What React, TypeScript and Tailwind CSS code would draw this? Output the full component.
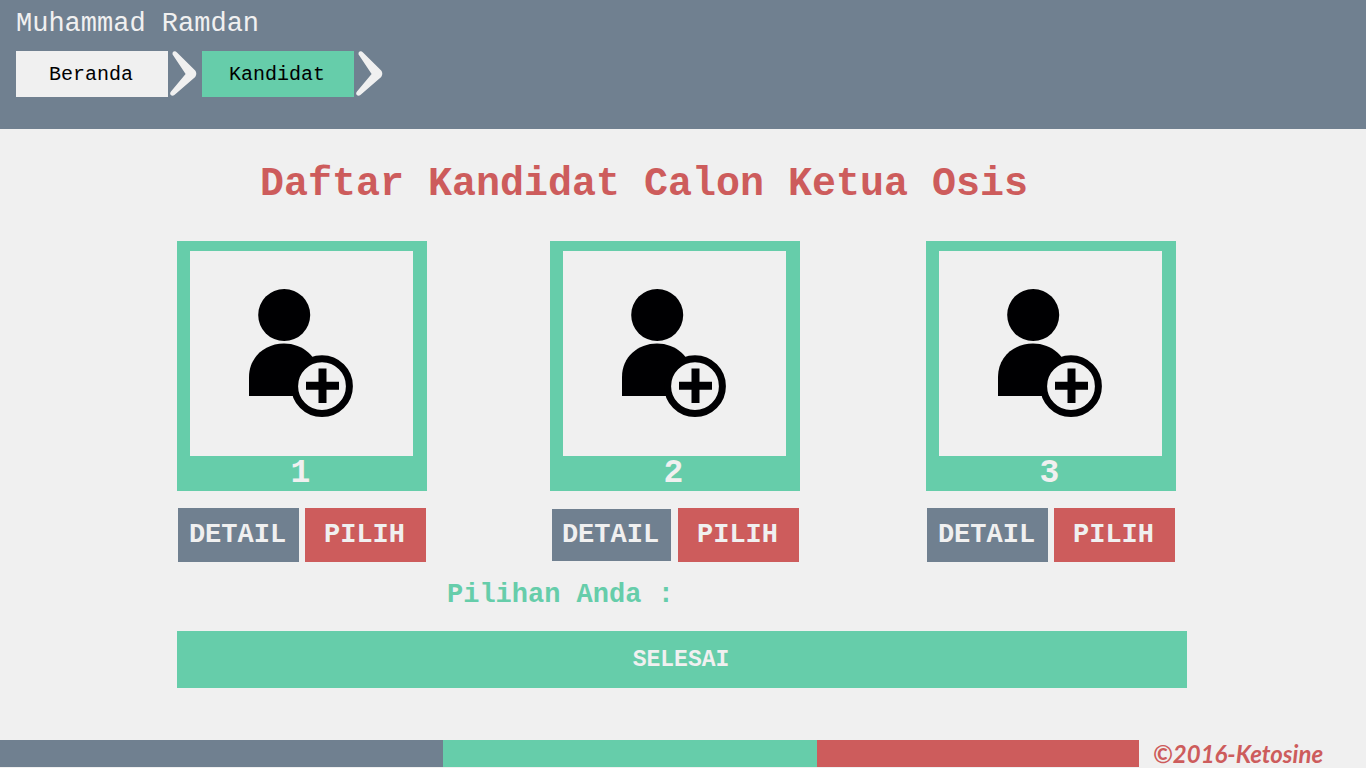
import React from "react";

const steps = [
  { label: "Beranda", tone: "bg-[#f0f0f0]" },
  { label: "Kandidat", tone: "bg-[#66cdaa]" },
];

const candidates = [
  { number: 1, active: false },
  { number: 2, active: true },
  { number: 3, active: false },
];

function Chevron() {
  return (
    <svg aria-hidden="true" viewBox="0 0 34 46" className="h-[46px] w-[34px] shrink-0" fill="#f0f0f0">
      <path d="M9 1.4 L27.2 19.6 Q29.4 22.8 27.2 26 L6.4 44 Q4.4 45.6 2.8 44 Q1.4 42.4 3 40.6 L17.6 23 L4.6 3.4 Q4.2 1.2 5.6 0.5 Q7.5 -0.1 9 1.4 Z" />
    </svg>
  );
}

function AddPersonIcon() {
  return (
    <svg aria-hidden="true" viewBox="0 0 223 205" className="h-[205px] w-[223px]" fill="#000002">
      <circle cx="94.2" cy="64" r="26" />
      <path d="M59 145 V126 C59 106 75 92.5 94 92.5 C113 92.5 129 106 129 126 V145 Z" />
      <circle cx="132" cy="135.2" r="27.4" fill="#f0f0f0" stroke="#000002" strokeWidth="7" />
      <path d="M128.5 117.5 h8 v13.3 h12.5 v7.9 h-12.5 v13.3 h-8 v-13.3 h-12.5 v-7.9 h12.5 Z" />
    </svg>
  );
}

function CandidateCard({ number, active }: { number: number; active: boolean }) {
  return (
    <article className="w-[250px]">
      <div className="flex h-[250px] flex-col items-center bg-[#66cdaa] pt-2.5 pr-px">
        <div className="bg-[#f0f0f0]">
          <AddPersonIcon />
        </div>
        <h2 className="pr-0.5 text-[33px] leading-[35px] font-bold text-[#f0f0f0]">{number}</h2>
      </div>
      <div className="mt-[17px] grid grid-cols-2 gap-1.5 px-px text-[27px] font-bold text-[#f0f0f0]">
        <button
          type="button"
          className={
            active
              ? "h-[54px] border border-[#f0f0f0] bg-[#708090] pr-0.5"
              : "h-[54px] bg-[#708090] pr-0.5"
          }
        >
          DETAIL
        </button>
        <button type="button" className="h-[54px] bg-[#cd5c5c] pr-0.5">
          PILIH
        </button>
      </div>
    </article>
  );
}

export default function App() {
  return (
    <div className="flex min-h-screen flex-col bg-[#f0f0f0] font-['Liberation_Mono','Courier_New',monospace]">
      <header className="bg-[#708090] px-4 pt-2 pb-8">
        <p className="text-[27px] leading-8 text-[#f0f0f0]">Muhammad Ramdan</p>
        <nav className="mt-[11px] flex">
          {steps.map((step) => (
            <div key={step.label} className="flex">
              <a
                href="#"
                className={`flex h-[46px] w-[152px] items-center justify-center pt-0.5 pr-0.5 text-xl text-black ${step.tone}`}
              >
                {step.label}
              </a>
              <Chevron />
            </div>
          ))}
        </nav>
      </header>

      <main className="pr-[179px] pl-[177px]">
        <h1 className="pt-8 pl-[83px] text-[40px] leading-[48px] font-bold text-[#cd5c5c]">
          Daftar Kandidat Calon Ketua Osis
        </h1>
        <section className="mt-8 grid grid-cols-[373fr_376fr_261px]">
          {candidates.map((candidate) => (
            <CandidateCard key={candidate.number} {...candidate} />
          ))}
        </section>
        <p className="mt-[17px] pl-[270px] text-[27px] leading-8 font-bold text-[#66cdaa]">Pilihan Anda :</p>
        <button
          type="button"
          className="mt-5 h-[57px] w-full bg-[#66cdaa] pt-0.5 pr-0.5 text-[23px] font-bold text-[#f0f0f0]"
        >
          SELESAI
        </button>
      </main>

      <footer className="mt-auto grid grid-cols-[443fr_374fr_322fr_227fr] pb-px">
        <div className="h-[27px] bg-[#708090]" />
        <div className="bg-[#66cdaa]" />
        <div className="bg-[#cd5c5c]" />
        <p className="pl-3.5 font-['Lato',sans-serif] text-2xl leading-[27px] font-bold whitespace-nowrap text-[#cd5c5c] italic">
          ©2016-Ketosine
        </p>
      </footer>
    </div>
  );
}
